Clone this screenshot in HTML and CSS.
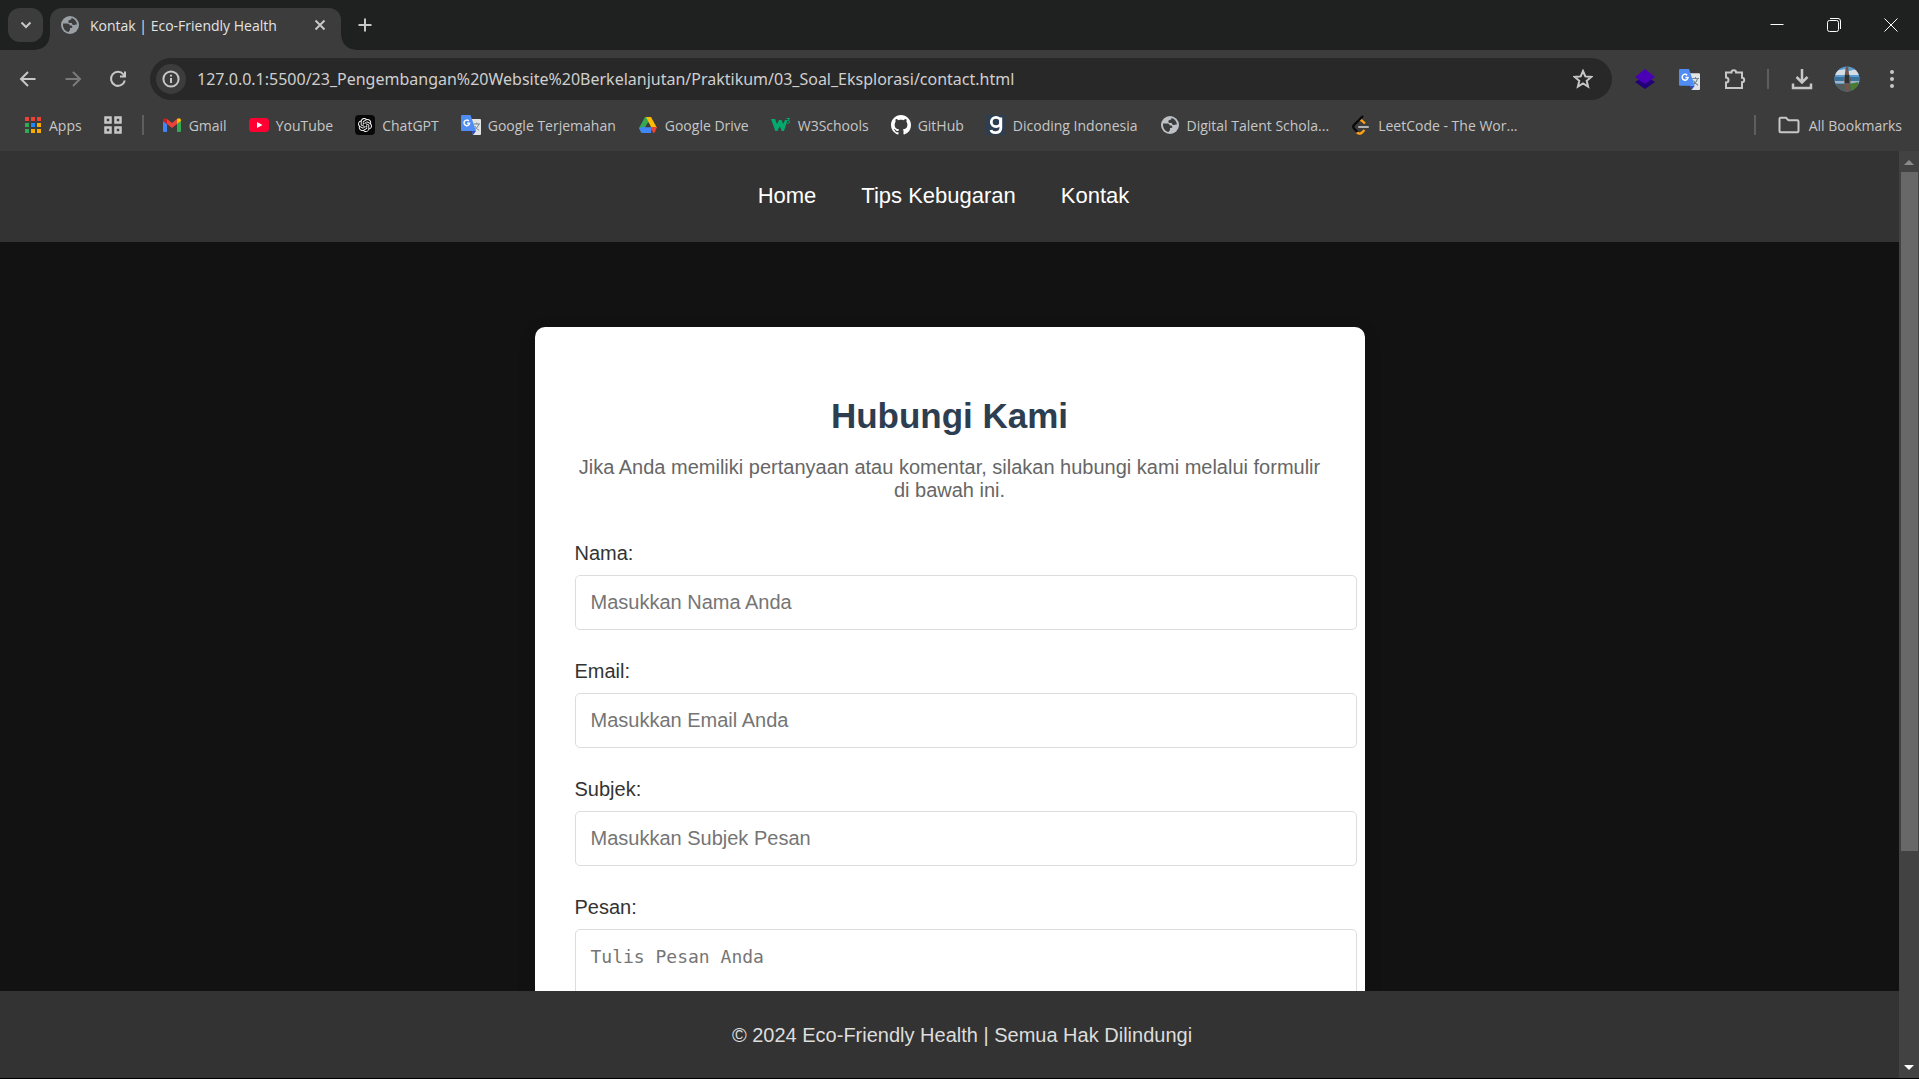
FILE: index.html
```html
<!DOCTYPE html>
<html lang="id">
<head>
<meta charset="utf-8">
<meta name="viewport" content="width=device-width, initial-scale=1">
<title>Kontak | Eco-Friendly Health</title>
<link rel="stylesheet" href="styles.css">
</head>
<body>
<svg class="symbols" aria-hidden="true">
  <symbol id="globe" viewBox="0 0 20 20">
    <circle cx="10" cy="10" r="9"/>
    <path class="globe-land" d="M3 8.500h4.500c1.500 0 2 1 2.500 2h1.500c1 0 1.300 2.500 0 2.500H10v2l-1.500 2C5 16.500 2.700 13 3 8.500zM11.500 3.100c0 1.400-.8 1.900-2 1.900C8 5 8 8 9.500 8h2c.5 0 .5 2 2 2 1.600 0 2-.7 3.500-.4C16.500 6 14.500 3.700 11.500 3.100z"/>
  </symbol>
  <symbol id="translate" viewBox="0 0 20 20">
    <path fill="#e4e4e4" d="M8 4h11a1 1 0 0 1 1 1v14a1 1 0 0 1-1 1h-7z"/>
    <path fill="none" stroke="#6f8790" d="M12.500 9H19M15.700 7.500V9M17.800 9c-.6 2.500-2.200 4.500-4.300 5.800M13.800 11c.8 1.600 2.300 3.300 4.300 4.400"/>
    <path fill="#2a49c9" d="M10.500 16h4.500L12 20z"/>
    <path fill="#4f8df5" d="M1 0h8.500L15 16H1a1 1 0 0 1-1-1V1a1 1 0 0 1 1-1z"/>
    <path fill="none" stroke="#fff" stroke-width="1.400" d="M7.800 5.900A2.800 2.800 0 1 0 8.600 8.100H6"/>
  </symbol>
</svg>

<div class="browser">
  <div class="tabstrip">
    <button class="tab-search" aria-label="Search tabs"><svg width="14" height="14" viewBox="0 0 14 14"><path class="line strong" d="M2.500 4.500L7 9l4.500-4.500"/></svg></button>
    <div class="tab">
      <svg class="globe" width="20" height="20"><use href="#globe"/></svg>
      <span class="tab-title">Kontak | Eco-Friendly Health</span>
      <button class="icon-button tab-close" aria-label="Close tab"><svg width="12" height="12" viewBox="0 0 12 12"><path class="line strong" d="M1.500 1.500l9 9M10.500 1.500l-9 9"/></svg></button>
    </div>
    <button class="icon-button new-tab" aria-label="New tab"><svg width="14" height="14" viewBox="0 0 14 14"><path class="line strong" d="M7 .5v13M.5 7h13"/></svg></button>
    <div class="window-buttons">
      <button class="icon-button" aria-label="Minimize"><svg width="14" height="14" viewBox="0 0 14 14"><path class="line white" d="M.5 6.500h13"/></svg></button>
      <button class="icon-button" aria-label="Restore"><svg width="14" height="14" viewBox="0 0 14 14"><rect class="line white" x=".5" y="2.500" width="11" height="11" rx="2"/><path class="line white" d="M3 .5h8a2.500 2.500 0 0 1 2.500 2.500v8"/></svg></button>
      <button class="icon-button" aria-label="Close"><svg width="14" height="14" viewBox="0 0 14 14"><path class="line white" d="M.5.5l13 13M13.500.5l-13 13"/></svg></button>
    </div>
  </div>

  <div class="toolbar">
    <button class="icon-button" aria-label="Back"><svg width="18" height="18" viewBox="0 0 18 18"><path class="line strong" d="M16.500 9H2.500M9 2L2 9l7 7"/></svg></button>
    <button class="icon-button dim" aria-label="Forward"><svg width="18" height="18" viewBox="0 0 18 18"><path class="line strong" d="M1.500 9h14M9 2l7 7-7 7"/></svg></button>
    <button class="icon-button" aria-label="Reload"><svg width="18" height="18" viewBox="0 0 18 18"><path class="line strong" d="M15.800 10.500A7 7 0 1 1 14.500 4.500L16 6.500M16 1.500v5h-5"/></svg></button>
    <div class="omnibox">
      <button class="site-info" aria-label="Site information"><svg width="18" height="18" viewBox="0 0 18 18"><circle class="line strong" cx="9" cy="9" r="7.600"/><path class="line strong" d="M9 8v5M9 4.800v1.800"/></svg></button>
      <input class="url" type="text" aria-label="Address" value="127.0.0.1:5500/23_Pengembangan%20Website%20Berkelanjutan/Praktikum/03_Soal_Eksplorasi/contact.html">
      <button class="icon-button star" aria-label="Bookmark this page"><svg width="20" height="20" viewBox="0 0 20 20"><path class="line strong" d="M10 2l2.300 5.400 5.900.5-4.500 3.900 1.400 5.800L10 14.500l-5.100 3.100 1.400-5.800-4.500-3.900 5.900-.5z"/></svg></button>
    </div>
    <button class="icon-button" aria-label="Layers"><svg width="22" height="22" viewBox="0 0 22 22"><path fill="#220078" d="M1 14l10-6 10 6-10 7z"/><path fill="#4a00b4" d="M1 9l10-8 10 8-10 7z"/></svg></button>
    <button class="icon-button" aria-label="Google Translate"><svg width="21" height="21"><use href="#translate"/></svg></button>
    <button class="icon-button" aria-label="Extensions"><svg width="22" height="22" viewBox="0 0 22 22"><path class="line strong" d="M2 4.500h5.500a2.300 2.300 0 0 1 4.600 0H18v5.300a2.200 2.200 0 0 1 0 4.400V20H2v-5.500a2.500 2.500 0 0 0 0-5z"/></svg></button>
    <span class="divider"></span>
    <button class="icon-button" aria-label="Downloads"><svg width="22" height="22" viewBox="0 0 22 22"><path class="line heavy" d="M11 1v13M5.500 9l5.500 5.500L16.500 9M2 15.500V20h18v-4.500"/></svg></button>
    <button class="icon-button" aria-label="Profile"><svg width="26" height="26" viewBox="0 0 26 26">
      <clipPath id="face"><circle cx="13" cy="13" r="12.500"/></clipPath>
      <g clip-path="url(#face)"><path fill="#5b9bd0" d="M0 0h26v26H0z"/><path fill="#d5dce3" d="M1 7c4-5 7-2 9-4l5 2 8-2 3 6H0z"/><path fill="#39729a" d="M0 11h26v6H0z"/><path fill="#9fb4c2" d="M0 15h26v2H0z"/><path fill="#515c5a" d="M0 18h26v8H0z"/><path fill="#497b31" d="M16 18l8-2 2 8-9 2z"/><path fill="#6c5750" d="M12 0h2l1 8 2 5-2 13h-4L10 14z"/><path fill="#293338" d="M11 9h4v8h-4z"/></g></svg></button>
    <button class="icon-button" aria-label="Menu"><svg width="20" height="20" viewBox="0 0 20 20"><g fill="#c7c7c7"><circle cx="10" cy="3" r="2"/><circle cx="10" cy="10" r="2"/><circle cx="10" cy="17" r="2"/></g></svg></button>
  </div>

  <nav class="bookmarks" aria-label="Bookmarks">
    <a class="bookmark apps" href="#"><svg width="18" height="18" viewBox="0 0 18 18"><path fill="#ea4335" d="M1 1h4v4H1zM7 1h4v4H7zM13 1h4v4h-4z"/><path fill="#34a853" d="M1 7h4v4H1z"/><path fill="#1e88f5" d="M7 7h4v4H7z"/><path fill="#f9ab00" d="M13 7h4v4h-4zM7 13h4v4H7zM13 13h4v4h-4z"/><path fill="#34a853" d="M1 13h4v4H1z"/></svg>Apps</a>
    <button class="icon-button tab-groups" aria-label="Tab groups"><svg width="18" height="18" viewBox="0 0 18 18"><path class="line heavy" d="M1.500 1.500h5v5h-5zM11.500 1.500h5v5h-5zM1.500 11.500h5v5h-5zM11.500 11.500h5v5h-5z"/></svg></button>
    <span class="divider first"></span>
    <a class="bookmark" href="#"><svg width="20" height="20" viewBox="0 0 20 20"><path fill="#4285f4" d="M1 6l4 3v8H2.300A1.300 1.300 0 0 1 1 15.700z"/><path fill="#34a853" d="M19 6l-4 3v8h2.700a1.300 1.300 0 0 0 1.300-1.300z"/><path fill="#ea4335" d="M5 9V4l5 4 5-4v5l-5 4z"/><path fill="#c5221f" d="M1 5.500C1 3.400 3.300 2.500 5 4v5L1 6z"/><path fill="#fbbc04" d="M19 5.500C19 3.400 16.700 2.500 15 4v5l4-3z"/></svg>Gmail</a>
    <a class="bookmark" href="#"><svg width="20" height="20" viewBox="0 0 20 20"><rect y="3" width="20" height="14" rx="3.500" fill="#ff0033"/><path fill="#fff" d="M8 7l5.500 3L8 13z"/></svg>YouTube</a>
    <a class="bookmark" href="#"><svg width="20" height="20" viewBox="0 0 20 20"><rect width="20" height="20" rx="4" fill="#080808"/><g transform="translate(3 3) scale(.583)"><path fill="#fff" d="M22.282 9.821a5.985 5.985 0 0 0-.516-4.910 6.046 6.046 0 0 0-6.510-2.900A6.065 6.065 0 0 0 4.981 4.182a5.985 5.985 0 0 0-3.998 2.900 6.046 6.046 0 0 0 .743 7.097 5.980 5.980 0 0 0 .511 4.911 6.051 6.051 0 0 0 6.515 2.900A5.985 5.985 0 0 0 13.260 24a6.056 6.056 0 0 0 5.772-4.206 5.990 5.990 0 0 0 3.998-2.900 6.056 6.056 0 0 0-.748-7.073zM13.260 22.430a4.476 4.476 0 0 1-2.876-1.041l.141-.080 4.779-2.758a.795.795 0 0 0 .392-.681v-6.737l2.020 1.169a.071.071 0 0 1 .038.052v5.583a4.504 4.504 0 0 1-4.494 4.493zM3.600 18.304a4.471 4.471 0 0 1-.535-3.014l.142.085 4.783 2.759a.771.771 0 0 0 .781 0l5.843-3.369v2.332a.080.080 0 0 1-.033.062L9.740 19.950a4.500 4.500 0 0 1-6.140-1.646zM2.341 7.896a4.485 4.485 0 0 1 2.366-1.973V11.600a.766.766 0 0 0 .388.677l5.815 3.355-2.020 1.168a.076.076 0 0 1-.071 0l-4.830-2.787A4.504 4.504 0 0 1 2.341 7.872zm16.597 3.855l-5.833-3.387L15.119 7.200a.076.076 0 0 1 .071 0l4.830 2.791a4.494 4.494 0 0 1-.676 8.105v-5.678a.790.790 0 0 0-.407-.667zm2.010-3.023l-.141-.085-4.774-2.782a.776.776 0 0 0-.785 0L9.409 9.230V6.897a.066.066 0 0 1 .028-.061l4.830-2.787a4.500 4.500 0 0 1 6.680 4.660zM8.307 12.863l-2.020-1.164a.080.080 0 0 1-.038-.057V6.074a4.500 4.500 0 0 1 7.375-3.453l-.142.080L8.704 5.459a.795.795 0 0 0-.393.681zm1.097-2.365l2.602-1.500 2.607 1.500v2.999l-2.597 1.500-2.607-1.500z"/></g></svg>ChatGPT</a>
    <a class="bookmark" href="#"><svg width="20" height="20"><use href="#translate"/></svg>Google Terjemahan</a>
    <a class="bookmark" href="#"><svg width="20" height="20" viewBox="0 0 20 20"><path fill="#34a853" d="M7 2h3l2 3-8.500 13L1 13z"/><path fill="#fbbc04" d="M8 2h5l6 11h-5.500z"/><path fill="#4285f4" d="M4 12h10l-1 6H4.500a2 2 0 0 1-1.500-1L1 13z"/><path fill="#ea4335" d="M13 12h6l-2 5q-.5 1-2 1z"/><path fill="#3c3c3c" d="M10 7.500l2.800 4.700H7.200z"/></svg>Google Drive</a>
    <a class="bookmark" href="#"><svg width="20" height="20" viewBox="0 0 20 20"><path fill="#04aa6d" d="M0 4h4l2 5 2-4h2.500l1.700 4L14 5h2.500L13 16h-2.300L8.800 11l-2.300 5H4.300z"/><path fill="none" stroke="#04aa6d" d="M15.500 3.500h3L17 5.300c2.500 0 2 3-.2 3l-1.500-.5"/></svg>W3Schools</a>
    <a class="bookmark" href="#"><svg width="20" height="20" viewBox="0 0 16 16"><path fill="#fff" d="M8 0C3.580 0 0 3.580 0 8c0 3.540 2.290 6.530 5.470 7.590.4.070.55-.17.55-.38 0-.19-.01-.82-.01-1.490-2.010.37-2.530-.49-2.690-.94-.09-.23-.48-.94-.82-1.130-.28-.15-.68-.52-.01-.53.63-.01 1.080.58 1.230.82.72 1.210 1.870.87 2.330.66.07-.52.28-.87.51-1.070-1.780-.2-3.640-.89-3.640-3.950 0-.87.31-1.590.82-2.150-.08-.2-.36-1.020.08-2.120 0 0 .67-.21 2.200.82.64-.18 1.320-.27 2-.27s1.360.09 2 .27c1.530-1.040 2.200-.82 2.200-.82.44 1.100.16 1.920.08 2.120.51.56.82 1.270.82 2.150 0 3.070-1.870 3.750-3.650 3.950.29.25.54.73.54 1.480 0 1.070-.01 1.930-.01 2.200 0 .21.15.46.55.38A8 8 0 0 0 16 8c0-4.420-3.580-8-8-8z"/></svg>GitHub</a>
    <a class="bookmark" href="#"><svg width="20" height="20" viewBox="0 0 20 20"><path fill="#2d3e50" d="M0 0h20v20H0z"/><circle cx="10" cy="7" r="4.700" fill="none" stroke="#fff" stroke-width="2.800"/><path fill="none" stroke="#fff" stroke-width="2.800" d="M14.800 2.500V13c0 6-9 5.500-9.800 2"/></svg>Dicoding Indonesia</a>
    <a class="bookmark" href="#"><svg class="globe light" width="20" height="20"><use href="#globe"/></svg>Digital Talent Schola...</a>
    <a class="bookmark" href="#"><svg width="20" height="20" viewBox="0 0 20 20"><path fill="none" stroke="#ffa116" stroke-width="2.300" d="M8.500 5.500l1.500-.6 4 3.600M5.500 17l2 1.500q1.500.5 3-.5l3-3"/><path fill="none" stroke="#080808" stroke-width="2.300" d="M12 1L3 10q-1.500 1.800 0 3.500L6.500 17"/><path stroke="#b3b3b3" stroke-width="2" stroke-linecap="round" d="M8 12h9"/></svg>LeetCode - The Wor...</a>
    <span class="divider last"></span>
    <a class="bookmark all" href="#"><svg width="22" height="20" viewBox="0 0 22 20"><path class="line strong" d="M1.500 16V4q0-1.200 1.200-1.200H8l2.500 2.500h8.800q1.200 0 1.200 1.200V16q0 1.200-1.200 1.200H2.700Q1.500 17.200 1.500 16z"/></svg>All Bookmarks</a>
  </nav>

  <div class="viewport">
    <div class="page">
      <header class="site-header">
        <nav class="site-nav">
          <a href="#">Home</a>
          <a href="#">Tips Kebugaran</a>
          <a href="#">Kontak</a>
        </nav>
      </header>
      <main class="content">
        <section class="card">
          <h1>Hubungi Kami</h1>
          <p class="intro">Jika Anda memiliki pertanyaan atau komentar, silakan hubungi kami melalui formulir di bawah ini.</p>
          <form class="contact-form">
            <label for="nama">Nama:</label>
            <input id="nama" type="text" placeholder="Masukkan Nama Anda">
            <label for="email">Email:</label>
            <input id="email" type="email" placeholder="Masukkan Email Anda">
            <label for="subjek">Subjek:</label>
            <input id="subjek" type="text" placeholder="Masukkan Subjek Pesan">
            <label for="pesan">Pesan:</label>
            <textarea id="pesan" rows="5" placeholder="Tulis Pesan Anda"></textarea>
          </form>
        </section>
      </main>
      <footer class="site-footer">© 2024 Eco-Friendly Health | Semua Hak Dilindungi</footer>
    </div>
    <div class="scrollbar" aria-hidden="true">
      <svg width="20" height="20" viewBox="0 0 20 20"><path fill="#8b8b8b" d="M5 14l5-5 5 5z"/></svg>
      <div class="track"><div class="thumb"></div></div>
      <svg width="20" height="20" viewBox="0 0 20 20"><path fill="#fff" d="M5 7h10l-5 5z"/></svg>
    </div>
  </div>
</div>
</body>
</html>
```
FILE: styles.css
```css
* {
  box-sizing: border-box;
}

body {
  margin: 0;
  background: #000;
  font-family: "Liberation Sans", Arial, sans-serif;
}

button {
  padding: 0;
  border: 0;
  background: none;
}

a {
  color: inherit;
  text-decoration: none;
}

svg {
  display: block;
  flex: none;
}

.symbols {
  position: absolute;
  width: 0;
  height: 0;
}

.browser {
  display: flex;
  flex-direction: column;
  height: 100vh;
  padding-bottom: 1px;
  color: #c7c7c7;
  font-family: "Open Sans", "Segoe UI", sans-serif;
}

/* Shared icon styling */
.line {
  fill: none;
  stroke: #c7c7c7;
}

.line.strong {
  stroke-width: 2;
}

.line.heavy {
  stroke-width: 2.5;
}

.line.white {
  stroke: #fff;
}

.dim {
  opacity: 0.45;
}

.globe {
  fill: #9aa0a6;
}

.globe.light {
  fill: #bdc1c6;
}

.globe-land {
  fill: #3c3c3c;
}

.icon-button {
  display: grid;
  place-items: center;
  flex: none;
  width: 45px;
  height: 36px;
}

.divider {
  flex: none;
  width: 2px;
  height: 20px;
  background: #5e5e5e;
}

/* Tab strip */
.tabstrip {
  display: flex;
  flex: none;
  height: 50px;
  padding: 8px 0 0 8px;
  background: #1f2120;
}

.tab-search {
  display: grid;
  place-items: center;
  width: 35px;
  height: 34px;
  border-radius: 12px;
  background: #3c3c3c;
}

.tab {
  position: relative;
  display: flex;
  align-items: center;
  gap: 10px;
  width: 291px;
  margin-left: 7px;
  padding: 0 9px 8px 10px;
  border-radius: 12px 12px 0 0;
  background: #3c3c3c;
}

.tab::before,
.tab::after {
  content: "";
  position: absolute;
  bottom: 0;
  width: 14px;
  height: 14px;
}

.tab::before {
  right: 100%;
  background: radial-gradient(circle at 0 0, transparent 13px, #3c3c3c 14px);
}

.tab::after {
  left: 100%;
  background: radial-gradient(circle at 100% 0, transparent 13px, #3c3c3c 14px);
}

.tab-title {
  flex: 1;
  color: #e3e3e3;
  font-size: 14px;
  white-space: nowrap;
}

.tab-close {
  width: 24px;
}

.new-tab {
  margin-left: 1px;
  height: 34px;
}

.window-buttons {
  display: flex;
  margin-left: auto;
}

.window-buttons .icon-button {
  width: 57px;
  height: 34px;
}

/* Toolbar */
.toolbar {
  display: flex;
  align-items: center;
  flex: none;
  height: 58px;
  padding: 0 5px;
  background: #3c3c3c;
}

.omnibox {
  display: flex;
  align-items: center;
  flex: 1;
  height: 42px;
  margin: 0 10px;
  padding: 0 7px 0 6px;
  border-radius: 21px;
  background: #282828;
}

.site-info {
  display: grid;
  place-items: center;
  width: 30px;
  height: 30px;
  border-radius: 50%;
  background: #3c3c3c;
}

.url {
  flex: 1;
  margin: 0;
  padding: 0 0 0 11px;
  border: 0;
  outline: 0;
  background: none;
  color: #cfcfcf;
  font-family: "Noto Sans", "Segoe UI", sans-serif;
  font-size: 16px;
}

.toolbar .divider {
  margin: 0 10px;
}

/* Bookmarks bar */
.bookmarks {
  display: flex;
  align-items: center;
  flex: none;
  gap: 22px;
  height: 43px;
  padding: 0 17px 9px 24px;
  background: #3c3c3c;
  font-size: 14px;
}

.bookmark {
  display: flex;
  align-items: center;
  gap: 7px;
  white-space: nowrap;
}

.tab-groups {
  width: 18px;
}

.divider.first {
  margin: 0 -4px 0 -2px;
}

.divider.last {
  margin-left: auto;
}

.bookmark.all {
  gap: 9px;
}

/* Browser viewport */
.viewport {
  display: flex;
  flex: 1;
  min-height: 0;
}

.page {
  display: flex;
  flex-direction: column;
  flex: 1;
  background: #121212;
  font-family: "Liberation Sans", Arial, sans-serif;
  font-size: 20px;
  line-height: 23px;
}

.site-header {
  flex: none;
  padding: 33px 12px 35px 0;
  background: #333;
  color: #fff;
  font-size: 22px;
}

.site-nav {
  display: flex;
  justify-content: center;
  gap: 45px;
}

.content {
  flex: 1;
  min-height: 0;
  padding: 85px 20px 0;
  overflow: hidden;
}

.card {
  max-width: 830px;
  margin: 0 auto;
  padding: 69px 40px 40px;
  border-radius: 10px;
  background: #fff;
  box-shadow: 0 5px 19px rgba(0, 0, 0, 0.1);
}

.card h1 {
  margin: 0 0 20px;
  color: #2c3e50;
  font-size: 35px;
  line-height: 40px;
  text-align: center;
}

.intro {
  margin: 0 0 40px;
  color: #666;
  text-align: center;
}

.contact-form label {
  display: block;
  margin-bottom: 10px;
  color: #333;
}

.contact-form input,
.contact-form textarea {
  display: block;
  box-sizing: content-box;
  width: 100%;
  height: 23px;
  margin: 0 0 30px;
  padding: 15px;
  border: 1px solid #ddd;
  border-radius: 5px;
  background: #fff;
  font-family: inherit;
  font-size: 20px;
  line-height: 23px;
}

.contact-form textarea {
  height: 150px;
  resize: none;
  font-family: "DejaVu Sans Mono", Consolas, monospace;
  font-size: 18px;
}

.contact-form ::placeholder {
  color: #757575;
}

.site-footer {
  flex: none;
  padding: 33px 0 31px 25px;
  background: #333;
  color: #ddd;
  text-align: center;
}

/* Scrollbar */
.scrollbar {
  display: flex;
  flex-direction: column;
  width: 20px;
  background: #424242;
}

.track {
  display: flex;
  flex-direction: column;
  flex: 1;
  padding: 1px 1px 0 2px;
}

.track::after {
  content: "";
  flex: 7;
}

.thumb {
  flex: 23;
  background: #686868;
}
```
